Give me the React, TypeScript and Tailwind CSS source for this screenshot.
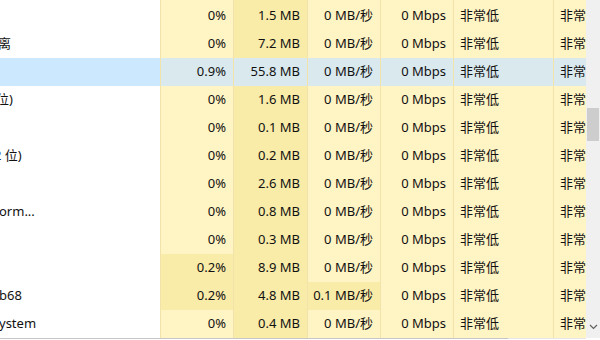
import React from 'react'

type Row = {
  name: string
  nameOffset: string
  cpu: string
  cpuHot?: boolean
  mem: string
  disk: string
  diskHot?: boolean
  selected?: boolean
}

const rows: Row[] = [
  { name: '', nameOffset: '', cpu: '0%', mem: '1.5 MB', disk: '0 MB/秒' },
  { name: '离', nameOffset: '-ml-[2px]', cpu: '0%', mem: '7.2 MB', disk: '0 MB/秒' },
  { name: '', nameOffset: '', cpu: '0.9%', mem: '55.8 MB', disk: '0 MB/秒', selected: true },
  { name: '位)', nameOffset: '-ml-[4px]', cpu: '0%', mem: '1.6 MB', disk: '0 MB/秒' },
  { name: '', nameOffset: '', cpu: '0%', mem: '0.1 MB', disk: '0 MB/秒' },
  { name: '2 位)', nameOffset: '-ml-[6px]', cpu: '0%', mem: '0.2 MB', disk: '0 MB/秒' },
  { name: '', nameOffset: '', cpu: '0%', mem: '2.6 MB', disk: '0 MB/秒' },
  { name: 'orm...', nameOffset: '-ml-[1px]', cpu: '0%', mem: '0.8 MB', disk: '0 MB/秒' },
  { name: '', nameOffset: '', cpu: '0%', mem: '0.3 MB', disk: '0 MB/秒' },
  { name: '', nameOffset: '', cpu: '0.2%', cpuHot: true, mem: '8.9 MB', disk: '0 MB/秒' },
  { name: 'b68', nameOffset: '-ml-[1px]', cpu: '0.2%', cpuHot: true, mem: '4.8 MB', disk: '0.1 MB/秒', diskHot: true },
  { name: 'ystem', nameOffset: '-ml-[1px]', cpu: '0%', mem: '0.4 MB', disk: '0 MB/秒' },
]

const cellBg = (selected?: boolean, hot?: boolean) =>
  selected ? 'bg-[#d9e9ee]' : hot ? 'bg-[#f9eba8]' : 'bg-[#fff4c4]'

function ProcessRow({ row }: { row: Row }) {
  const num = 'flex items-center justify-end pr-[7px] border-l border-[#f1e3a9] shrink-0'
  const txt = 'flex items-center pl-[6px] border-l border-[#f1e3a9] shrink-0 overflow-hidden whitespace-nowrap'

  return (
    <div className="flex h-[28px] shrink-0">
      <div className={`w-[160px] shrink-0 flex items-center overflow-hidden whitespace-nowrap ${row.selected ? 'bg-[#cce8ff]' : 'bg-white'}`}>
        <span className={row.nameOffset}>{row.name}</span>
      </div>
      <div className={`w-[73px] ${num} pr-[6px] ${cellBg(row.selected, row.cpuHot)}`}>{row.cpu}</div>
      <div className={`w-[74px] ${num} ${row.selected ? 'bg-[#d9e9ee]' : 'bg-[#f9eba8]'}`}>{row.mem}</div>
      <div className={`w-[73px] ${num} ${cellBg(row.selected, row.diskHot)}`}>{row.disk}</div>
      <div className={`w-[73px] ${num} ${cellBg(row.selected)}`}>0 Mbps</div>
      <div className={`w-[100px] ${txt} ${cellBg(row.selected)}`}>非常低</div>
      <div className={`w-[33px] ${txt} pl-[5px] ${cellBg(row.selected)}`}>非常低</div>
    </div>
  )
}

export default function App() {
  return (
    <div
      className="w-[600px] h-[340px] overflow-hidden bg-white flex text-[13px] text-[#111]"
      style={{ fontFamily: '"Noto Sans", "Noto Sans CJK SC", sans-serif' }}
    >
      <div className="w-[586px] shrink-0 flex flex-col">
        {/* bottom sliver of the row scrolled above */}
        <div className="flex h-[2px] shrink-0">
          <div className="w-[160px] bg-white" />
          <div className="w-[73px] bg-[#fff4c4] border-l border-[#f1e3a9]" />
          <div className="w-[74px] bg-[#f9eba8] border-l border-[#f1e3a9]" />
          <div className="w-[73px] bg-[#fff4c4] border-l border-[#f1e3a9]" />
          <div className="w-[73px] bg-[#fff4c4] border-l border-[#f1e3a9]" />
          <div className="w-[100px] bg-[#fff4c4] border-l border-[#f1e3a9]" />
          <div className="w-[33px] bg-[#fff4c4] border-l border-[#f1e3a9]" />
        </div>
        {rows.map((row, i) => (
          <ProcessRow key={i} row={row} />
        ))}
        <div className="flex h-[1px] shrink-0">
          <div className="w-[508px] bg-[#c6c6c6]" />
          <div className="flex-1 bg-[#e6e6e6]" />
        </div>
      </div>

      <div className="w-[14px] h-[338px] bg-[#f0f0f0] flex flex-col items-center">
        <div className="h-[108px] shrink-0" />
        <div className="w-[12px] h-[33px] bg-[#cdcdcd]" />
        <div className="flex-1" />
        <svg width="9" height="6" viewBox="0 0 9 6" className="mb-[8px] ml-[1px]">
          <path d="M1 1 L4.5 4.5 L8 1" fill="none" stroke="#606060" strokeWidth="1.2" />
        </svg>
      </div>
    </div>
  )
}
